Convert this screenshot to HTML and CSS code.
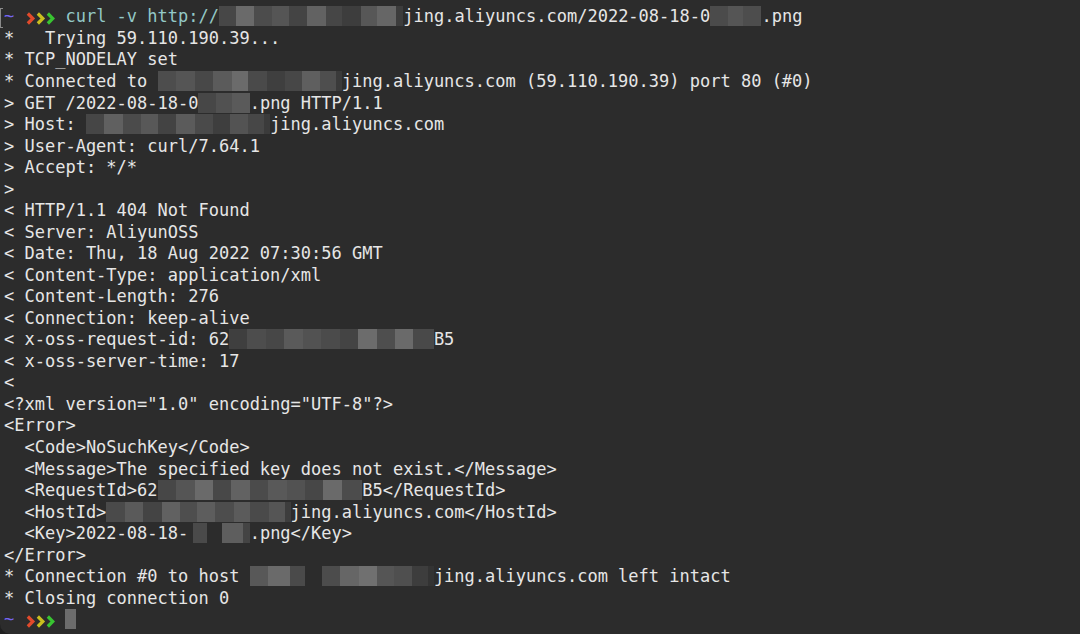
FILE: index.html
```html
<!DOCTYPE html>
<html>
<head>
<meta charset="utf-8">
<title>Terminal</title>
<link rel="stylesheet" href="styles.css">
</head>
<body>
<div class="window">
<div class="term">
<div class="ln first"><span class="tilde">~</span> <svg class="arrows" viewBox="0 0 30 13" width="30.7" height="13"><polyline class="a1" points="2.5,1.5 7.5,6.5 2.5,11.5"/><polyline class="a2" points="12.5,1.5 17.5,6.5 12.5,11.5"/><polyline class="a3" points="22.5,1.5 27.5,6.5 22.5,11.5"/></svg> <span class="cmd">curl -v http://</span><span class="bz host-a">                  </span>jing.aliyuncs.com/2022-08-18-0<span class="bz file-a">     </span>.png</div>
<div class="ln">*   Trying 59.110.190.39...</div>
<div class="ln">* TCP_NODELAY set</div>
<div class="ln">* Connected to <span class="bz host-b">                  </span>jing.aliyuncs.com (59.110.190.39) port 80 (#0)</div>
<div class="ln">&gt; GET /2022-08-18-0<span class="bz file-b">     </span>.png HTTP/1.1</div>
<div class="ln">&gt; Host: <span class="bz host-c">                  </span>jing.aliyuncs.com</div>
<div class="ln">&gt; User-Agent: curl/7.64.1</div>
<div class="ln">&gt; Accept: */*</div>
<div class="ln">&gt;</div>
<div class="ln">&lt; HTTP/1.1 404 Not Found</div>
<div class="ln">&lt; Server: AliyunOSS</div>
<div class="ln">&lt; Date: Thu, 18 Aug 2022 07:30:56 GMT</div>
<div class="ln">&lt; Content-Type: application/xml</div>
<div class="ln">&lt; Content-Length: 276</div>
<div class="ln">&lt; Connection: keep-alive</div>
<div class="ln">&lt; x-oss-request-id: 62<span class="bz req-a">                    </span>B5</div>
<div class="ln">&lt; x-oss-server-time: 17</div>
<div class="ln">&lt;</div>
<div class="ln">&lt;?xml version="1.0" encoding="UTF-8"?&gt;</div>
<div class="ln">&lt;Error&gt;</div>
<div class="ln">  &lt;Code&gt;NoSuchKey&lt;/Code&gt;</div>
<div class="ln">  &lt;Message&gt;The specified key does not exist.&lt;/Message&gt;</div>
<div class="ln">  &lt;RequestId&gt;62<span class="bz req-b">                    </span>B5&lt;/RequestId&gt;</div>
<div class="ln">  &lt;HostId&gt;<span class="bz host-d">                  </span>jing.aliyuncs.com&lt;/HostId&gt;</div>
<div class="ln">  &lt;Key&gt;2022-08-18-<span class="bz file-c">      </span>.png&lt;/Key&gt;</div>
<div class="ln">&lt;/Error&gt;</div>
<div class="ln">* Connection #0 to host <span class="bz host-e">                  </span>jing.aliyuncs.com left intact</div>
<div class="ln">* Closing connection 0</div>
<div class="ln"><span class="tilde">~</span> <svg class="arrows" viewBox="0 0 30 13" width="30.7" height="13"><polyline class="a1" points="2.5,1.5 7.5,6.5 2.5,11.5"/><polyline class="a2" points="12.5,1.5 17.5,6.5 12.5,11.5"/><polyline class="a3" points="22.5,1.5 27.5,6.5 22.5,11.5"/></svg> <span class="cursor"> </span></div>
</div>
</div>
</body>
</html>
```

FILE: styles.css
```css
html, body {
  margin: 0;
  padding: 0;
  background: #1f1f1f;
}

.window {
  width: 1080px;
  height: 634px;
  overflow: hidden;
  background: #2c2c2c;
  border-bottom-left-radius: 10px;
}

.term {
  padding-top: 6.4px;
  padding-left: 4px;
  font-family: "DejaVu Sans Mono", "Liberation Mono", monospace;
  font-size: 17px;
  line-height: 21.54px;
  color: #e6e6e6;
}

.ln {
  white-space: pre;
  height: 21.54px;
  position: relative;
}

.first::before {
  content: "";
  position: absolute;
  left: -4px;
  top: 2px;
  width: 2px;
  height: 18px;
  border: 1px solid #8a8a8a;
  border-right: 0;
}

.tilde {
  color: #7565f0;
}

.cmd {
  color: #93c8c6;
}

.arrows {
  vertical-align: -3px;
}

.arrows polyline {
  fill: none;
  stroke-width: 3.2;
  stroke-linecap: butt;
  stroke-linejoin: miter;
}

.a1 { stroke: #e24a2b; }
.a2 { stroke: #c9bf1f; }
.a3 { stroke: #38c431; }

.cursor {
  background: #6c6c6c;
}

.bz {
  background-color: #4a4a4a;
}

.host-a {
  background-image: linear-gradient(90deg,
    #474747 0 9%, #6a6a6a 9% 19%, #4c4c4c 19% 29%, #555 29% 38%,
    #444 38% 48%, #626262 48% 58%, #464646 58% 67%, #3d3d3d 67% 77%,
    #575757 77% 86%, #666 86% 96%, #3c3c3c 96% 100%);
}

.host-b {
  background-image: linear-gradient(90deg,
    #4d4d4d 0 10%, #555 10% 20%, #484848 20% 30%, #5b5b5b 30% 40%,
    #6b6b6b 40% 49%, #4a4a4a 49% 59%, #3f3f3f 59% 69%, #474747 69% 78%,
    #5f5f5f 78% 88%, #4e4e4e 88% 97%, #3a3a3a 97% 100%);
}

.host-c {
  background-image: linear-gradient(90deg,
    #464646 0 10%, #606060 10% 20%, #4b4b4b 20% 30%, #585858 30% 39%,
    #434343 39% 49%, #5b5b5b 49% 59%, #4a4a4a 59% 69%, #3e3e3e 69% 78%,
    #535353 78% 88%, #474747 88% 97%, #3b3b3b 97% 100%);
}

.host-d {
  background-image: linear-gradient(90deg,
    #4a4a4a 0 10%, #5a5a5a 10% 20%, #444 20% 30%, #616161 30% 40%,
    #4e4e4e 40% 49%, #5d5d5d 49% 59%, #4d4d4d 59% 69%, #5b5b5b 69% 78%,
    #4a4a4a 78% 88%, #555 88% 97%, #3d3d3d 97% 100%);
}

.host-e {
  background-image: linear-gradient(90deg,
    #585858 0 10%, #6a6a6a 10% 22%, #4a4a4a 22% 30%, #2c2c2c 30% 39%,
    #4c4c4c 39% 49%, #666 49% 59%, #707070 59% 69%, #555 69% 78%,
    #4f4f4f 78% 88%, #3d3d3d 88% 97%, #333 97% 100%);
}

.file-a {
  background-image: linear-gradient(90deg,
    #4b4b4b 0 35%, #555 35% 65%, #4d4d4d 65% 100%);
}

.file-b {
  background-image: linear-gradient(90deg,
    #474747 0 34%, #515151 34% 66%, #5a5a5a 66% 100%);
}

.file-c {
  background-image: linear-gradient(90deg,
    #2c2c2c 0 8%, #4a4a4a 8% 30%, #2c2c2c 30% 55%, #5e5e5e 55% 88%, #444 88% 100%);
}

.req-a {
  background-image: linear-gradient(90deg,
    #3f3f3f 0 9%, #4d4d4d 9% 18%, #474747 18% 27%, #5a5a5a 27% 36%,
    #525252 36% 45%, #4b4b4b 45% 54%, #444 54% 63%, #6c6c6c 63% 72%,
    #4e4e4e 72% 81%, #6a6a6a 81% 90%, #494949 90% 100%);
}

.req-b {
  background-image: linear-gradient(90deg,
    #474747 0 9%, #555 9% 18%, #6a6a6a 18% 27%, #484848 27% 36%,
    #626262 36% 45%, #4b4b4b 45% 54%, #595959 54% 63%, #525252 63% 72%,
    #474747 72% 81%, #6a6a6a 81% 90%, #4c4c4c 90% 100%);
}
```
